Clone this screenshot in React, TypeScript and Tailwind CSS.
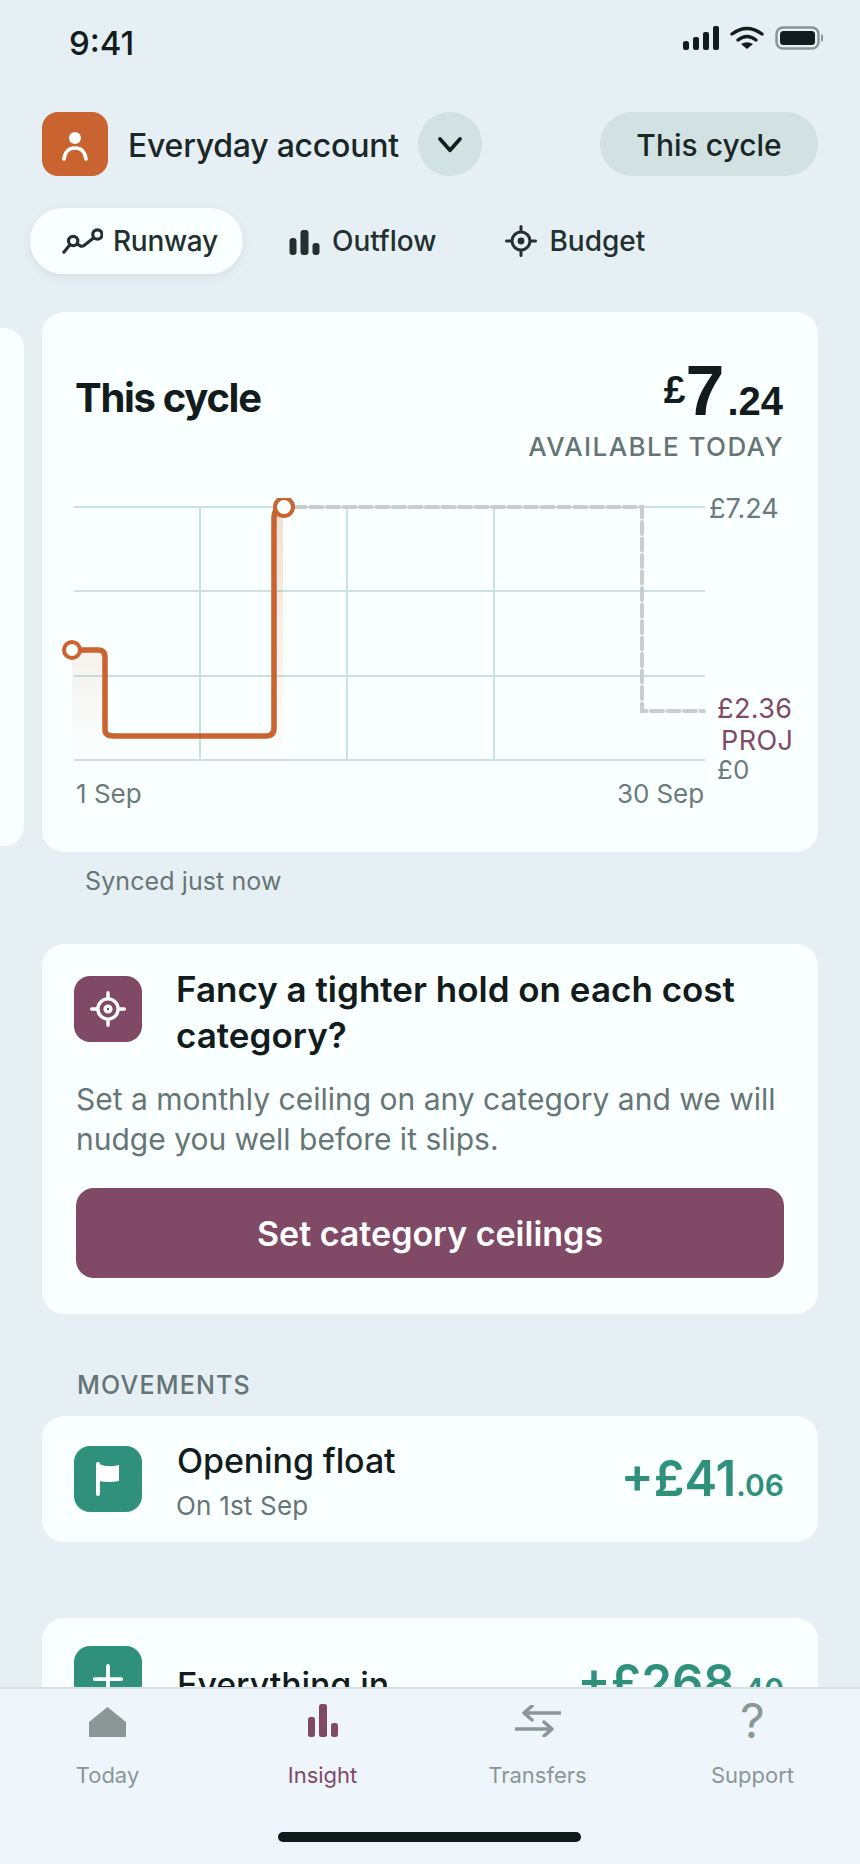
import React from 'react';

const FONT = "font-['Inter','Noto_Sans',sans-serif]";

const TargetIcon = ({ className, stroke, solid }: { className: string; stroke: string; solid?: boolean }) => (
  <svg viewBox="0 0 32 32" className={className} fill="none" stroke={stroke} strokeWidth="3" strokeLinecap="round">
    <circle cx="16" cy="16" r="9" />
    {solid ? <circle cx="16" cy="16" r="3.4" fill={stroke} stroke="none" /> : <circle cx="16" cy="16" r="2.6" />}
    <path d="M16 1.5v5M16 25.5v5M1.5 16h5M25.5 16h5" />
  </svg>
);

const Tab = ({ label, icon, active, className = '' }: { label: string; icon: React.ReactNode; active?: boolean; className?: string }) => (
  <div className={`flex items-center h-[66px] rounded-full ${active ? 'bg-[#FAFFFF] shadow-[0_3px_10px_rgba(30,60,70,0.08)] pl-[32px] w-[213px] gap-[10px]' : 'gap-[12px]'} ${className}`}>
    {icon}
    <span className={`text-[28px] font-medium text-[#22302F] ${active ? 'tracking-[-0.3px]' : ''}`}>{label}</span>
  </div>
);

const NavItem = ({ label, icon, active }: { label: string; icon: React.ReactNode; active?: boolean }) => (
  <div className="flex flex-col items-center w-[215px]">
    <div className="h-[46px] flex items-end justify-center">{icon}</div>
    <span className={`mt-[24px] text-[22px] leading-[28px] ${active ? 'text-[#804A66]' : 'text-[#8B9696]'}`}>{label}</span>
  </div>
);

const Amount = ({ whole, cents }: { whole: string; cents: string }) => (
  <div className="font-semibold text-[#2F917C] leading-none whitespace-nowrap">
    <span className="text-[49px]">{whole}</span>
    <span className="text-[30px]">{cents}</span>
  </div>
);

const Chart = () => (
  <div className="relative h-[300px] mt-[35px]">
    <svg viewBox="0 0 776 300" className="absolute left-[-34px] top-0 w-[776px] h-[300px]" fill="none">
      <defs>
        <linearGradient id="under" gradientUnits="userSpaceOnUse" x1="0" y1="9" x2="0" y2="262">
          <stop offset="0" stopColor="#C9632F" stopOpacity="0.2" />
          <stop offset="1" stopColor="#C9632F" stopOpacity="0" />
        </linearGradient>
      </defs>
      <g stroke="#CBE0E0" strokeWidth="2">
        <path d="M32 9H663M32 93H663M32 178H663M32 262H663" />
        <path d="M158 9V262M305 9V262M452 9V262" />
      </g>
      <path d="M30 152H56Q63 152 63 159V232Q63 238 72 238H224Q232 238 232 230V16L241 9V262H30Z" fill="url(#under)" stroke="none" />
      <path d="M252 9H600V213H662" stroke="#C9CDCD" strokeWidth="4" strokeDasharray="12 4.5" strokeLinecap="round" />
      <path d="M30 152H56Q63 152 63 159V232Q63 238 72 238H224Q232 238 232 230V20Q232 12 238 9" stroke="#C9632F" strokeWidth="5.5" />
      <circle cx="30" cy="152" r="8" fill="#FAFFFF" stroke="#C9632F" strokeWidth="4" />
      <circle cx="242" cy="9" r="9" fill="#FAFFFF" stroke="#C9632F" strokeWidth="4" />
    </svg>
    <span className="absolute left-[633px] top-[-5px] text-[27px] leading-[32px] text-[#6B7B7B]">£7.24</span>
    <span className="absolute left-[641px] top-[195px] text-[27px] tracking-[0.4px] leading-[32px] text-[#804A66]">£2.36</span>
    <span className="absolute left-[645px] top-[227px] text-[27px] tracking-[0.4px] leading-[32px] text-[#804A66]">PROJ</span>
    <span className="absolute left-[641px] top-[256px] text-[26px] leading-[32px] text-[#6B7B7B]">£0</span>
    <span className="absolute left-[0px] top-[280px] text-[26px] leading-[32px] text-[#6B7B7B]">1 Sep</span>
    <span className="absolute right-[80px] top-[280px] text-[26px] tracking-[-0.1px] leading-[32px] text-[#6B7B7B]">30 Sep</span>
  </div>
);

export default function App() {
  return (
    <div className={`relative flex flex-col w-[860px] h-[1864px] overflow-hidden bg-[#E6EFF4] ${FONT} text-[#121C1C]`}>
      <div className="h-[1687px] shrink-0 overflow-hidden">
        <div className="flex items-start justify-between pl-[69px] pr-[37px] pt-[24px] h-[112px]">
          <span className="text-[33px] font-medium leading-[36px] mt-[1px]">9:41</span>
          <div className="flex items-start gap-[11px] mt-[2px]">
            <svg viewBox="0 0 36 24" className="w-[36px] h-[24px]" fill="#121C1C">
              <rect x="0" y="15" width="6" height="9" rx="2.5" />
              <rect x="10" y="11" width="6" height="13" rx="2" />
              <rect x="20" y="6" width="6" height="18" rx="2" />
              <rect x="30" y="0" width="6" height="24" rx="2" />
            </svg>
            <svg viewBox="0 0 34 24" className="w-[34px] h-[24px]" fill="none" stroke="#121C1C" strokeWidth="3.4" strokeLinecap="round">
              <path d="M2 8Q17 -3 32 8" />
              <path d="M8 14Q17 7 26 14" />
              <path d="M17 23l-6-5Q17 14.500 23 18Z" fill="#121C1C" stroke="none" />
            </svg>
            <svg viewBox="0 0 48 24" className="w-[48px] h-[24px]">
              <rect x="1.500" y="1.500" width="42" height="21" rx="6.500" fill="none" stroke="#8A9595" strokeWidth="2.500" />
              <rect x="5" y="5" width="35" height="14" rx="3.500" fill="#121C1C" />
              <rect x="46" y="8.500" width="2" height="7" rx="1" fill="#8A9595" />
            </svg>
          </div>
        </div>

        <div className="flex items-center pl-[42px] pr-[42px] h-[64px]">
          <div className="w-[66px] h-[64px] rounded-[16px] bg-[#C9632F] flex items-center justify-center">
            <svg viewBox="0 0 32 36" className="w-[32px] h-[36px]" fill="none" stroke="#FFFFFF" strokeWidth="3.6" strokeLinecap="round">
              <circle cx="16" cy="12" r="6" fill="#FFFFFF" stroke="none" />
              <path d="M5 33C6 26 10 22 16 22S26 26 27 33" />
            </svg>
          </div>
          <span className="ml-[20px] text-[32px] font-medium tracking-[-0.25px] leading-[44px] mt-[3px] text-[#1A2727]">Everyday account</span>
          <div className="ml-[19px] w-[64px] h-[64px] rounded-full bg-[#D2E2E3] flex items-center justify-center">
            <svg viewBox="0 0 24 24" className="w-[30px] h-[30px]" fill="none" stroke="#121C1C" strokeWidth="3" strokeLinecap="round" strokeLinejoin="round">
              <path d="M4 8l8 9 8-9" />
            </svg>
          </div>
          <div className="ml-auto w-[218px] h-[64px] rounded-full bg-[#D2E2E3] flex items-center justify-center text-[30px] font-medium text-[#1A2727] pt-[2px]">
            This cycle
          </div>
        </div>

        <div className="flex items-center gap-[46px] pl-[30px] mt-[32px]">
          <Tab
            active
            label="Runway"
            icon={
              <svg viewBox="0 0 44 30" className="w-[41px] h-[28px]" fill="none" stroke="#22302F" strokeWidth="3.4" strokeLinecap="round">
                <path d="M2 27L8.500 19" />
                <circle cx="12" cy="15" r="5" />
                <path d="M16 18L20 20.500Q22 21 24 19.500L33.500 12" />
                <circle cx="38" cy="8" r="5" />
              </svg>
            }
          />
          <Tab
            label="Outflow"
            icon={
              <svg viewBox="0 0 30 25" className="w-[31px] h-[25px] mt-[2px]" fill="#22302F">
                <rect x="0" y="8" width="7" height="17" rx="3" />
                <rect x="11" y="0" width="8" height="25" rx="3" />
                <rect x="23" y="13" width="7" height="12" rx="3" />
              </svg>
            }
          />
          <Tab className="ml-[23px]" label="Budget" icon={<TargetIcon solid className="w-[32px] h-[32px]" stroke="#22302F" />} />
        </div>

        <div className="flex gap-[18px] mt-[38px]">
          <div className="w-[24px] h-[518px] mt-[16px] bg-[#FAFFFF] rounded-r-[20px]" />
          <div className="w-[776px] h-[540px] bg-[#FAFFFF] rounded-[22px] px-[34px] pt-[48px]">
            <div className="flex justify-between items-start">
              <span className="text-[40px] font-bold tracking-[-1.3px] leading-[50px] mt-[13px] -ml-[1px]">This cycle</span>
              <div className="flex flex-col items-end">
                <div className="flex items-baseline font-bold leading-[52px] h-[52px] mt-[5px] mr-[1px] font-['Liberation_Sans',sans-serif]">
                  <span className="text-[39px] self-start mt-[-1px]">£</span>
                  <span className="text-[70px]">7</span>
                  <span className="text-[40px] ml-[3px]">.24</span>
                </div>
                <span className="text-[26px] font-medium tracking-[1.4px] text-[#657575] leading-[32px] mt-[14px]">AVAILABLE TODAY</span>
              </div>
            </div>
            <Chart />
          </div>
        </div>

        <div className="pl-[85px] mt-[13px] text-[25px] tracking-[0.1px] leading-[32px] text-[#667676]">Synced just now</div>

        <div className="mx-[42px] mt-[47px] h-[370px] bg-[#FAFFFF] rounded-[22px] px-[34px] pt-[22px]">
          <div className="flex items-start gap-[34px]">
            <div className="w-[68px] h-[66px] mt-[10px] -ml-[2px] rounded-[16px] bg-[#804A66] flex items-center justify-center shrink-0">
              <TargetIcon className="w-[36px] h-[36px]" stroke="#FFFFFF" />
            </div>
            <div className="text-[35px] font-semibold leading-[46px] text-[#121C1C]">Fancy a tighter hold on each cost category?</div>
          </div>
          <p className="mt-[21px] text-[30px] leading-[40px] text-[#667676]">Set a monthly ceiling on any category and we will nudge you well before it slips.</p>
          <div className="mt-[29px] h-[90px] rounded-[18px] bg-[#804A66] flex items-center justify-center text-[34px] font-semibold text-white">
            Set category ceilings
          </div>
        </div>

        <div className="pl-[77px] mt-[55px] text-[25px] font-medium tracking-[1.2px] leading-[32px] text-[#657575]">MOVEMENTS</div>

        <div className="mx-[42px] mt-[15px] h-[126px] bg-[#FAFFFF] rounded-[22px] pl-[32px] pr-[34px] flex items-center">
          <div className="w-[68px] h-[66px] rounded-[16px] bg-[#2F917C] flex items-center justify-center shrink-0">
            <svg viewBox="0 0 24 34" className="w-[24px] h-[34px]" fill="#FFFFFF">
              <rect x="0" y="0" width="4" height="34" rx="2" />
              <path d="M3 2Q12 6 23 3V19Q12 21 3 19Z" />
            </svg>
          </div>
          <div className="ml-[35px] flex flex-col mt-[2px]">
            <span className="text-[34px] font-medium leading-[44px] tracking-[-0.1px]">Opening float</span>
            <span className="text-[26px] tracking-[0.2px] leading-[32px] text-[#667676] mt-[7px] -ml-[1px]">On 1st Sep</span>
          </div>
          <div className="ml-auto -mt-[2px]"><Amount whole="+£41" cents=".06" /></div>
        </div>

        <div className="mx-[42px] mt-[76px] h-[125px] bg-[#FAFFFF] rounded-[22px] pl-[32px] pr-[34px] flex items-center">
          <div className="w-[68px] h-[66px] rounded-[16px] bg-[#2F917C] flex items-center justify-center shrink-0 -mt-[4px]">
            <svg viewBox="0 0 32 32" className="w-[30px] h-[30px]" fill="none" stroke="#FFFFFF" strokeWidth="4" strokeLinecap="round">
              <path d="M16 2V30M2 16H30" />
            </svg>
          </div>
          <span className="ml-[35px] text-[34px] font-medium leading-[44px] tracking-[-0.1px] mt-[8px]">Everything in</span>
          <div className="ml-auto mt-[4px]"><Amount whole="+£268" cents=".40" /></div>
        </div>
      </div>

      <div className="relative h-[177px] shrink-0 bg-[#EEF6FB] border-t-2 border-[#D5E0E2]">
        <div className="flex pt-[2px]">
          <NavItem
            label="Today"
            icon={
              <svg viewBox="0 0 37 30" className="w-[37px] h-[30px]" fill="#8B9696"><path d="M0 15L18.500 0L37 15V30H0Z" /></svg>
            }
          />
          <NavItem
            active
            label="Insight"
            icon={
              <svg viewBox="0 0 30 33" className="w-[30px] h-[33px]" fill="#804A66">
                <rect x="0" y="13" width="7" height="20" rx="2.500" />
                <rect x="11" y="0" width="8" height="33" rx="2.500" />
                <rect x="23" y="19" width="7" height="14" rx="2.500" />
              </svg>
            }
          />
          <NavItem
            label="Transfers"
            icon={
              <svg viewBox="0 0 46 32" className="w-[46px] h-[32px]" fill="none" stroke="#8B9696" strokeWidth="3.500" strokeLinecap="round" strokeLinejoin="round">
                <path d="M45 8H9M17 1L9 8l8 7" />
                <path d="M1 24H37M29 17l8 7-8 7" />
              </svg>
            }
          />
          <NavItem
            label="Support"
            icon={<span className="text-[48px] leading-[36px] text-[#8B9696] -mb-[2px]">?</span>}
          />
        </div>
        <div className="absolute left-[278px] bottom-[22px] w-[303px] h-[10px] rounded-full bg-[#0F1A1A]" />
      </div>
    </div>
  );
}
